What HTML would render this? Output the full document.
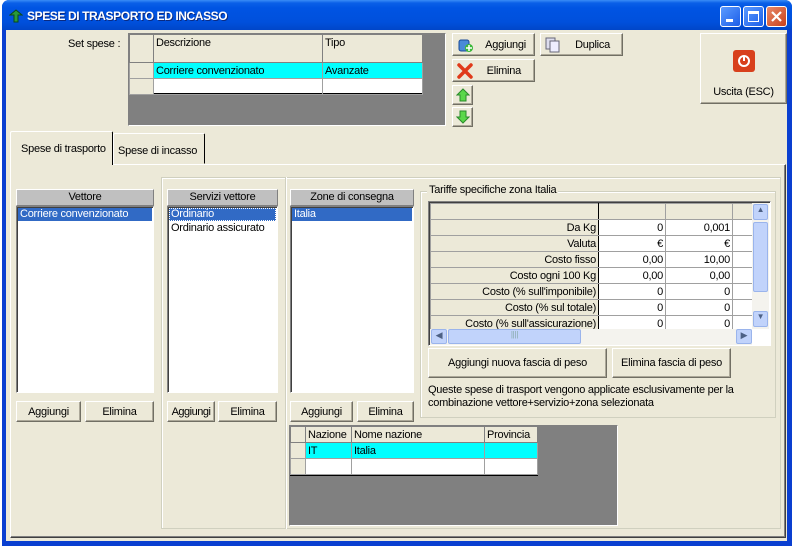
<!DOCTYPE html>
<html><head><meta charset="utf-8"><style>
*{box-sizing:border-box;margin:0;padding:0}
body{width:792px;height:546px;overflow:hidden;background:#fff;font-family:"Liberation Sans",sans-serif;font-size:11px;letter-spacing:-0.25px;color:#000;position:relative}
.a{position:absolute}
.btn{position:absolute;background:#ece9d8;border:1px solid;border-color:#fff #716f64 #716f64 #fff;box-shadow:inset -1px -1px 0 #aca899;display:flex;align-items:center;justify-content:center;font-size:11px;white-space:nowrap}
.hdr{position:absolute;background:#c0c0c0;border:1px solid;border-color:#fff #808080 #808080 #fff;text-align:center;line-height:15px}
.list{position:absolute;background:#fff;border:1px solid;border-color:#808080 #fff #fff #808080;box-shadow:inset 1px 1px 0 #404040}
.sel{background:#316ac5;color:#fff;padding-left:2px;line-height:13px;height:13px;margin:1px}
table{border-collapse:collapse}
td{border:1px solid #a0a0a0;height:16px;padding:0 2px;font-size:11px;white-space:nowrap;overflow:hidden}
.gb{position:absolute;border:1px solid #d0d0bf;box-shadow:1px 1px 0 #fff inset}
</style></head><body>
<div class="a" style="left:2px;top:0;width:790px;height:546px;background:#0a3fd0;border-radius:7px 7px 0 0"></div>
<div class="a" style="left:2px;top:0;width:790px;height:30px;border-radius:7px 7px 0 0;background:linear-gradient(#3a8cf6 0,#0a5fe8 3px,#0054e3 8px,#0050dc 22px,#0046c8 30px)"></div>
<div class="a" style="left:9px;top:9px;width:14px;height:14px"><svg width="14" height="14"><path d="M7 1 L13 6 L9 6 L9 13 L5 13 L5 6 L1 6Z" fill="#2a9a3a" stroke="#0a4a1a" stroke-width="1"/></svg></div>
<div class="a" style="left:27px;top:9px;color:#fff;font-weight:bold;font-size:12px;letter-spacing:-0.4px;text-shadow:1px 1px #0a2a80">SPESE DI TRASPORTO ED INCASSO</div>
<div class="a" style="left:720px;top:6px;width:21px;height:21px;border:1px solid #fff;border-radius:3px;background:linear-gradient(135deg,#5b9bff,#1c5ee8)"><div class="a" style="left:5px;top:12px;width:7px;height:3px;background:#fff"></div></div>
<div class="a" style="left:743px;top:6px;width:21px;height:21px;border:1px solid #fff;border-radius:3px;background:linear-gradient(135deg,#5b9bff,#1c5ee8)"><div class="a" style="left:4px;top:4px;width:11px;height:11px;border:1px solid #fff;border-top-width:3px"></div></div>
<div class="a" style="left:766px;top:6px;width:21px;height:21px;border:1px solid #fff;border-radius:3px;background:linear-gradient(135deg,#e88a6a,#c8401c)"><svg class="a" style="left:3px;top:3px" width="13" height="13"><path d="M2 2L11 11M11 2L2 11" stroke="#fff" stroke-width="2.2"/></svg></div>
<div class="a" style="left:6px;top:30px;width:781px;height:511px;background:#ece9d8"></div>
<div class="a" style="left:68px;top:38px">Set spese :</div>
<div class="a" style="left:128px;top:33px;width:318px;height:93px;background:#808080;border:1px solid;border-color:#808080 #fff #fff #808080"></div>
<div class="a" style="left:129px;top:34px;width:294px;height:60px;background:#fff;border-right:1px solid #000;border-bottom:1px solid #000">
<table style="width:293px;table-layout:fixed"><col style="width:24px"><col style="width:169px"><col style="width:100px">
<tr style="background:#ece9d8"><td style="height:28px;vertical-align:top;border-color:#808080"></td><td style="vertical-align:top;padding-top:2px;border-color:#808080">Descrizione</td><td style="vertical-align:top;padding-top:2px;border-color:#808080">Tipo</td></tr>
<tr><td style="background:#ece9d8"></td><td style="background:#0ff">Corriere convenzionato</td><td style="background:#0ff">Avanzate</td></tr>
<tr><td style="background:#ece9d8"></td><td></td><td></td></tr></table></div>
<div class="btn" style="left:452px;top:33px;width:83px;height:23px;justify-content:flex-end;padding-right:8px"><svg class="a" style="left:4px;top:3px" width="16" height="16"><rect x="2" y="3" width="10" height="11" rx="2" fill="#4a8ad8" stroke="#1a4a98"/><circle cx="12" cy="11" r="4" fill="#3ab83a"/><path d="M12 8v6M9 11h6" stroke="#fff" stroke-width="1.5"/></svg>Aggiungi</div>
<div class="btn" style="left:540px;top:33px;width:83px;height:23px;justify-content:flex-end;padding-right:12px"><svg class="a" style="left:4px;top:3px" width="16" height="16"><rect x="1" y="1" width="9" height="11" fill="#dde" stroke="#667"/><rect x="5" y="4" width="9" height="11" fill="#eef" stroke="#667"/></svg>Duplica</div>
<div class="btn" style="left:452px;top:59px;width:83px;height:23px;justify-content:flex-end;padding-right:13px"><svg class="a" style="left:4px;top:3px" width="16" height="16"><path d="M2 2L14 14M14 2L2 14" stroke="#e03a1a" stroke-width="3.5" stroke-linecap="round"/></svg>Elimina</div>
<div class="btn" style="left:452px;top:85px;width:21px;height:20px"><svg width="14" height="14"><path d="M7 1L13 7H10V13H4V7H1Z" fill="#5ad84a" stroke="#2a8a2a"/></svg></div>
<div class="btn" style="left:452px;top:107px;width:21px;height:20px"><svg width="14" height="14"><path d="M7 13L13 7H10V1H4V7H1Z" fill="#5ad84a" stroke="#2a8a2a"/></svg></div>
<div class="btn" style="left:700px;top:33px;width:87px;height:71px;flex-direction:column;justify-content:flex-start"><div style="margin-top:16px;width:22px;height:22px;background:#d8401c;border-radius:3px;display:flex;align-items:center;justify-content:center"><svg width="14" height="14"><circle cx="7" cy="7" r="5" fill="none" stroke="#fff" stroke-width="2"/><path d="M7 2v5" stroke="#fff" stroke-width="2"/></svg></div><div style="margin-top:14px">Uscita (ESC)</div></div>
<div class="a" style="left:10px;top:164px;width:776px;height:374px;border:1px solid;border-color:#fff #404040 #404040 #fff;box-shadow:inset -1px -1px 0 #808080"></div>
<div class="a" style="left:113px;top:133px;width:92px;height:31px;border:1px solid;border-color:#fff #000 transparent #fff;border-radius:2px 2px 0 0;padding:11px 0 0 4px;font-size:11px">Spese di incasso</div>
<div class="a" style="left:10px;top:131px;width:103px;height:34px;background:#ece9d8;border:1px solid;border-color:#fff #000 transparent #fff;border-bottom:none;border-radius:2px 2px 0 0;padding:11px 0 0 10px">Spese di trasporto</div>
<div class="gb" style="left:161px;top:177px;width:620px;height:352px"></div>
<div class="a" style="left:285px;top:177px;width:2px;height:352px;border-left:1px solid #d0d0bf;border-right:1px solid #fff"></div>
<div class="hdr" style="left:16px;top:189px;width:138px;height:17px">Vettore</div>
<div class="list" style="left:16px;top:206px;width:138px;height:187px"><div class="sel">Corriere convenzionato</div></div>
<div class="btn" style="left:16px;top:401px;width:65px;height:21px">Aggiungi</div>
<div class="btn" style="left:85px;top:401px;width:69px;height:21px">Elimina</div>
<div class="hdr" style="left:167px;top:189px;width:111px;height:17px">Servizi vettore</div>
<div class="list" style="left:167px;top:206px;width:111px;height:187px"><div class="sel" style="outline:1px dotted #fff;outline-offset:-1px">Ordinario</div><div style="padding-left:3px;line-height:13px">Ordinario assicurato</div></div>
<div class="btn" style="left:167px;top:401px;width:48px;height:21px;letter-spacing:-0.5px">Aggiungi</div>
<div class="btn" style="left:218px;top:401px;width:59px;height:21px">Elimina</div>
<div class="hdr" style="left:290px;top:189px;width:124px;height:17px">Zone di consegna</div>
<div class="list" style="left:290px;top:206px;width:124px;height:187px"><div class="sel">Italia</div></div>
<div class="btn" style="left:290px;top:401px;width:63px;height:21px">Aggiungi</div>
<div class="btn" style="left:357px;top:401px;width:57px;height:21px">Elimina</div>
<div class="gb" style="left:420px;top:191px;width:356px;height:227px"></div>
<div class="a" style="left:427px;top:184px;background:#ece9d8;padding:0 2px">Tariffe specifiche zona Italia</div>
<div class="a" style="left:428px;top:201px;width:343px;height:145px;background:#fff;border:1px solid;border-color:#808080 #fff #fff #808080;box-shadow:inset 1px 1px 0 #404040;overflow:hidden">
<div class="a" style="left:1px;top:1px;width:323px;height:126px;overflow:hidden">
<table style="table-layout:fixed;width:325px"><col style="width:168px"><col style="width:67px"><col style="width:67px"><col style="width:23px">
<tr style="background:#ece9d8"><td style="border-right-color:#000"></td><td></td><td></td><td></td></tr>
<tr><td style="background:#ece9d8;text-align:right;border-right-color:#000">Da Kg</td><td style="text-align:right">0</td><td style="text-align:right">0,001</td><td></td></tr>
<tr><td style="background:#ece9d8;text-align:right;border-right-color:#000">Valuta</td><td style="text-align:right">€</td><td style="text-align:right">€</td><td></td></tr>
<tr><td style="background:#ece9d8;text-align:right;border-right-color:#000">Costo fisso</td><td style="text-align:right">0,00</td><td style="text-align:right">10,00</td><td></td></tr>
<tr><td style="background:#ece9d8;text-align:right;border-right-color:#000">Costo ogni 100 Kg</td><td style="text-align:right">0,00</td><td style="text-align:right">0,00</td><td></td></tr>
<tr><td style="background:#ece9d8;text-align:right;border-right-color:#000">Costo (% sull'imponibile)</td><td style="text-align:right">0</td><td style="text-align:right">0</td><td></td></tr>
<tr><td style="background:#ece9d8;text-align:right;border-right-color:#000">Costo (% sul totale)</td><td style="text-align:right">0</td><td style="text-align:right">0</td><td></td></tr>
<tr><td style="background:#ece9d8;text-align:right;border-right-color:#000">Costo (% sull'assicurazione)</td><td style="text-align:right">0</td><td style="text-align:right">0</td><td></td></tr>
</table></div>
<div class="a" style="left:323px;top:1px;width:17px;height:126px;background:#f4f3ee">
<div class="a" style="left:1px;top:1px;width:15px;height:16px;background:#c1d3fb;border:1px solid #9ab4ec;border-radius:2px;font-size:8px;text-align:center;color:#4d6185">▲</div>
<div class="a" style="left:1px;top:19px;width:15px;height:70px;background:#c1d3fb;border:1px solid #9ab4ec;border-radius:2px"></div>
<div class="a" style="left:1px;top:108px;width:15px;height:16px;background:#c1d3fb;border:1px solid #9ab4ec;border-radius:2px;font-size:8px;text-align:center;color:#4d6185">▼</div></div>
<div class="a" style="left:1px;top:127px;width:322px;height:16px;background:#f4f3ee">
<div class="a" style="left:1px;top:0;width:16px;height:15px;background:#c1d3fb;border:1px solid #9ab4ec;border-radius:2px;font-size:9px;text-align:center;color:#4d6185">◀</div>
<div class="a" style="left:18px;top:0;width:133px;height:15px;background:#c1d3fb;border:1px solid #9ab4ec;border-radius:2px;font-size:8px;text-align:center;color:#8aa">||||</div>
<div class="a" style="left:306px;top:0;width:16px;height:15px;background:#c1d3fb;border:1px solid #9ab4ec;border-radius:2px;font-size:9px;text-align:center;color:#4d6185">▶</div></div>
</div>
<div class="btn" style="left:428px;top:348px;width:179px;height:30px">Aggiungi nuova fascia di peso</div>
<div class="btn" style="left:612px;top:348px;width:119px;height:30px">Elimina fascia di peso</div>
<div class="a" style="left:428px;top:384px;line-height:13px;width:345px">Queste spese di trasport vengono applicate esclusivamente per la combinazione vettore+servizio+zona selezionata</div>
<div class="a" style="left:289px;top:425px;width:329px;height:101px;background:#808080;border:1px solid;border-color:#808080 #fff #fff #808080"></div>
<div class="a" style="left:290px;top:426px;width:248px;height:50px;background:#fff;border-right:1px solid #000;border-bottom:1px solid #000">
<table style="width:247px;table-layout:fixed"><col style="width:15px"><col style="width:46px"><col style="width:133px"><col style="width:53px">
<tr style="background:#ece9d8"><td style="border-color:#808080"></td><td style="border-color:#808080">Nazione</td><td style="border-color:#808080">Nome nazione</td><td style="border-color:#808080">Provincia</td></tr>
<tr><td style="background:#ece9d8"></td><td style="background:#0ff">IT</td><td style="background:#0ff">Italia</td><td style="background:#0ff"></td></tr>
<tr><td style="background:#ece9d8"></td><td></td><td></td><td></td></tr></table></div>
</body></html>
